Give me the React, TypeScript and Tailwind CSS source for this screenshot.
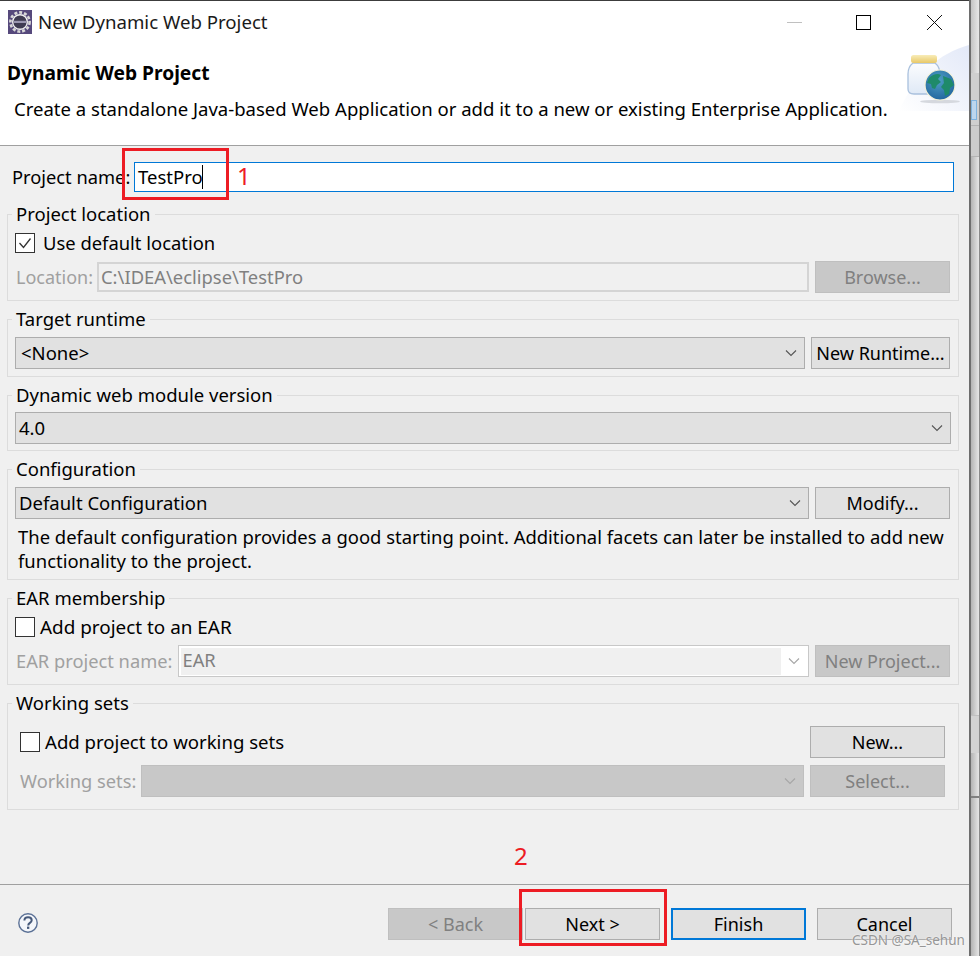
import type { ReactNode } from "react";

const font = "font-['Noto_Sans','Open_Sans',sans-serif]";

const Chevron = ({ muted }: { muted?: boolean }) => (
  <svg width="12" height="8" viewBox="0 0 12 8" fill="none" className="shrink-0">
    <path d="M1 1.5l5 5 5-5" stroke={muted ? "#a6a6a6" : "#555"} strokeWidth="1.1" />
  </svg>
);

const Btn = ({ label, disabled, className = "w-[135px]" }: { label: string; disabled?: boolean; className?: string }) => (
  <button
    className={`flex h-[32px] shrink-0 items-center justify-center border-[1.5px] text-[18px] leading-none ${className} ${
      disabled ? "border-[#bfbfbf] bg-[#c8c8c8] text-[#808080]" : "border-[#adadad] bg-[#e1e1e1] text-black"
    }`}
  >
    {label}
  </button>
);

const Select = ({ value, disabled, textLeft = "pl-[5px]", className = "" }: { value?: string; disabled?: boolean; textLeft?: string; className?: string }) => (
  <div
    className={`flex h-[32px] min-w-0 flex-1 items-center justify-between border-[1.5px] pr-[7px] text-[18.5px] ${textLeft} ${className} ${
      disabled ? "border-[#bfbfbf] bg-[#c8c8c8]" : "border-[#adadad] bg-[#e1e1e1] text-black"
    }`}
  >
    <span>{value}</span>
    <Chevron muted={disabled} />
  </div>
);

const Check = ({ checked }: { checked?: boolean }) => (
  <span className="flex h-[20px] w-[20px] shrink-0 items-center justify-center border border-[#333] bg-white">
    {checked && (
      <svg width="14" height="12" viewBox="0 0 14 12" fill="none">
        <path d="M1.5 6l4 4.5L12.5 1.5" stroke="#333" strokeWidth="1.3" />
      </svg>
    )}
  </span>
);

const Group = ({ title, className, outer = "mt-[6px]", children }: { title: string; className: string; outer?: string; children: ReactNode }) => (
  <fieldset className={`ml-[7px] w-[952px] border border-[#dcdcdc] ${outer}`}>
    <legend className="ml-[4px] px-[4px] text-[18.5px] leading-[24px] text-black">{title}</legend>
    <div className={className}>{children}</div>
  </fieldset>
);

const JarIcon = () => (
  <svg width="70" height="66" viewBox="0 0 70 66" className="absolute right-0 top-[44px]">
    <defs>
      <linearGradient id="bg" x1="0" y1="1" x2="1" y2="0">
        <stop offset="0" stopColor="#fff" />
        <stop offset="1" stopColor="#e3e9f8" />
      </linearGradient>
      <linearGradient id="lid" x1="0" y1="0" x2="0" y2="1">
        <stop offset="0" stopColor="#f8ecb8" />
        <stop offset="1" stopColor="#e8c868" />
      </linearGradient>
      <linearGradient id="glass" x1="0" y1="0" x2="0" y2="1">
        <stop offset="0" stopColor="#fbfcfe" />
        <stop offset="1" stopColor="#dfe9f6" />
      </linearGradient>
      <radialGradient id="globe" cx="0.45" cy="0.35" r="0.75">
        <stop offset="0" stopColor="#4f9fc4" />
        <stop offset="1" stopColor="#1d5f9a" />
      </radialGradient>
    </defs>
    <path d="M0 66C16 30 40 8 70 0V66Z" fill="url(#bg)" />
    <path d="M14 18h22c4 3 5 7 5 12v14c0 3-2 5-6 5H15c-4 0-6-2-6-5V29c0-5 1-8 5-11z" fill="url(#glass)" stroke="#a9c0dd" strokeWidth="1.3" />
    <rect x="12" y="10" width="26" height="8" rx="2.5" fill="url(#lid)" />
    <ellipse cx="41" cy="56.5" rx="20" ry="1.8" fill="#d5d8de" />
    <circle cx="41" cy="40" r="15" fill="url(#globe)" stroke="#f4f1d8" strokeWidth="1.2" />
    <path d="M30 33c4-4 9-5 12-3l-3 4 3 3-4 3-2 4-3-1-1-4-4-1zM44 31l8 3 3 6-4 3-1 6-4 2-1-6-3-3 3-4z" fill="#1f8a6a" />
  </svg>
);

const EclipseIcon = () => (
  <svg width="24" height="24" viewBox="0 0 24 24" className="shrink-0">
    <rect width="24" height="24" fill="#56497c" />
    <circle cx="12" cy="12" r="9.6" fill="none" stroke="#d8d8d8" strokeWidth="2.6" strokeDasharray="3 1.9" />
    <circle cx="12" cy="12" r="8" fill="#f0f0f0" />
    <circle cx="12" cy="12" r="6.6" fill="#3f3b52" />
    <path d="M5.6 10.8h12.8v2.2H5.6z" fill="#9a96b0" />
  </svg>
);

export default function App() {
  return (
    <div className={`relative flex h-[956px] w-[980px] overflow-hidden bg-[#f0f0f0] text-black ${font}`}>
      <div className="flex h-full w-[969px] shrink-0 flex-col">
        <div className="h-px bg-[#3c3c3c]" />
        {/* banner */}
        <header className="relative h-[145px] shrink-0 border-b border-[#a0a0a0] bg-white">
          <div className="flex h-[42px] items-center pl-[8px] pr-[27px]">
            <EclipseIcon />
            <span className="ml-[6px] text-[18.65px] text-[#1a1a1a]">New Dynamic Web Project</span>
            <div className="ml-auto flex items-center">
              <span className="h-px w-[15px] bg-[#c0c0c0]" />
              <span className="ml-[54px] h-[15px] w-[15px] border border-black" />
              <svg width="15" height="15" viewBox="0 0 15 15" className="ml-[56px]">
                <path d="M0 0l15 15M15 0L0 15" stroke="#111" strokeWidth="1" />
              </svg>
            </div>
          </div>
          <h1 className="mt-[18px] pl-[7px] text-[19.2px] font-bold leading-[24px]">Dynamic Web Project</h1>
          <p className="mt-[12px] pl-[14px] text-[18.55px] leading-[24px]">
            Create a standalone Java-based Web Application or add it to a new or existing Enterprise Application.
          </p>
          <JarIcon />
        </header>

        {/* form */}
        <main className="flex-1">
          <div className="flex items-center pl-[12px] pt-[16px] pr-[15px]">
            <label className="w-[122px] text-[18.3px]">Project name:</label>
            <div className="flex h-[30px] flex-1 items-center border border-[#0078d7] bg-white pl-[3px] text-[18.5px]">
              TestPro<span className="ml-[-1px] h-[24px] w-px bg-black" />
            </div>
          </div>

          <Group title="Project location" outer="mt-[10px]" className="pb-[7px] pl-[7px] pr-[8px]">
            <div className="mt-[7px] flex h-[20px] items-center">
              <Check checked />
              <span className="ml-[8px] text-[18.4px]">Use default location</span>
            </div>
            <div className="mt-[8px] flex items-center">
              <span className="ml-px w-[81px] text-[18px] text-[#a0a0a0]">Location:</span>
              <div className="flex h-[30px] min-w-0 flex-1 items-center border-2 border-[#d4d4d4] pl-[2px] text-[18.4px] text-[#808080]">
                C:\IDEA\eclipse\TestPro
              </div>
              <Btn label="Browse..." disabled className="ml-[6px] w-[135px]" />
            </div>
          </Group>

          <Group title="Target runtime" className="pb-[7px] pl-[7px] pr-[8px]">
            <div className="mt-[6px] flex">
              <Select value="<None>" />
              <Btn label="New Runtime..." className="ml-[6px] w-[139px]" />
            </div>
          </Group>

          <Group title="Dynamic web module version" className="pb-[6px] pl-[7px] pr-[7px]">
            <div className="mt-[5px] flex">
              <Select value="4.0" textLeft="pl-[3px]" />
            </div>
          </Group>

          <Group title="Configuration" className="pb-[6px] pl-[7px] pr-[8px]">
            <div className="mt-[6px] flex">
              <Select value="Default Configuration" textLeft="pl-[3px]" />
              <Btn label="Modify..." className="ml-[6px] w-[135px]" />
            </div>
            <p className="ml-[3px] mt-[6px] text-[18.45px] leading-[24px]">
              The default configuration provides a good starting point. Additional facets can later be installed to add new functionality to the project.
            </p>
          </Group>

          <Group title="EAR membership" className="pb-[7px] pl-[7px] pr-[8px]">
            <div className="mt-[7px] flex h-[20px] items-center">
              <Check />
              <span className="ml-[5px] text-[18.9px]">Add project to an EAR</span>
            </div>
            <div className="mt-[8px] flex items-center">
              <span className="ml-px w-[162px] text-[18.3px] text-[#a0a0a0]">EAR project name:</span>
              <div className="flex h-[32px] min-w-0 flex-1 border-[1.5px] border-[#c8c8c8] bg-white p-[1.5px]">
                <div className="flex flex-1 items-center bg-[#f0f0f0] pb-[2px] pl-[2px] text-[18.3px] text-[#808080]">EAR</div>
                <div className="flex w-[26px] items-center justify-center">
                  <Chevron muted />
                </div>
              </div>
              <Btn label="New Project..." disabled className="ml-[6px] w-[135px]" />
            </div>
          </Group>

          <Group title="Working sets" className="pb-[12px] pl-[12px] pr-[13px]">
            <div className="mt-[11px] flex h-[32px] items-center">
              <Check />
              <span className="ml-[5px] text-[18.6px]">Add project to working sets</span>
              <Btn label="New..." className="ml-auto w-[135px]" />
            </div>
            <div className="mt-[7px] flex items-center">
              <span className="w-[121px] text-[18.3px] text-[#a0a0a0]">Working sets:</span>
              <Select disabled />
              <Btn label="Select..." disabled className="ml-[6px] w-[135px]" />
            </div>
          </Group>
        </main>

        {/* footer */}
        <footer className="flex h-[72px] shrink-0 items-start border-t border-[#a0a0a0] pl-[18px] pr-[17px] pt-[23px]">
          <svg width="20" height="20" viewBox="0 0 20 20" className="mt-[5px] shrink-0">
            <circle cx="10" cy="10" r="9.2" fill="#f4f6fa" stroke="#5b7196" strokeWidth="1.4" />
            <path d="M6.4 7.6c0-2.2 1.6-3.4 3.7-3.4s3.6 1.2 3.6 3c0 2.8-3.5 2.6-3.5 5.2" fill="none" stroke="#46597a" strokeWidth="2" />
            <rect x="9" y="13.6" width="2.3" height="2.3" fill="#46597a" />
          </svg>
          <Btn label="< Back" disabled className="ml-auto w-[135px]" />
          <Btn label="Next >" className="ml-[2px] w-[135px]" />
          <Btn label="Finish" className="ml-[11px] w-[135px] !border-2 !border-[#0078d7]" />
          <Btn label="Cancel" className="ml-[11px] w-[135px]" />
        </footer>
      </div>

      {/* sliver of the window behind the dialog */}
      <div className="flex h-full flex-1 flex-col border-l-2 border-[#6e6e6e] border-r border-r-[#8a8a8a] bg-gradient-to-r from-[#b4b4b4] to-[#e6e6e6]">
        <div className="h-[73px] shrink-0 bg-gradient-to-r from-[#c4c4c4] to-[#e8e8e8]" />
        <div className="h-[52px] shrink-0 bg-[#cfcfcf] pt-[27px]">
          <div className="h-[20px] w-[6px] border border-[#7fb4e0] bg-[#bcd6ee]" />
        </div>
        <div className="h-[32px] shrink-0 border-y border-[#b4b4b4] bg-[#cccccc]" />
        <div className="h-[558px] shrink-0" />
        <div className="h-[38px] shrink-0 border-t border-[#c0c0c0] bg-[#d2d2d2]" />
        <div className="h-[45px] shrink-0 border-b-2 border-[#808080]" />
      </div>

      {/* red annotations */}
      <div className="absolute left-[122px] top-[148px] h-[52px] w-[107px] border-[3px] border-[#ed1c24]" />
      <span className="absolute left-[237px] top-[162px] text-[24px] leading-[28px] text-[#ed1c24]">1</span>
      <span className="absolute left-[514px] top-[842px] text-[24px] leading-[28px] text-[#ed1c24]">2</span>
      <div className="absolute left-[519px] top-[889px] h-[57px] w-[148px] border-[3px] border-[#ed1c24]" />

      <span className="absolute left-[852px] top-[932px] text-[13.5px] leading-[16px] text-[#969696] [text-shadow:0_0_2px_#fff]">
        CSDN @SA_sehun
      </span>
    </div>
  );
}
